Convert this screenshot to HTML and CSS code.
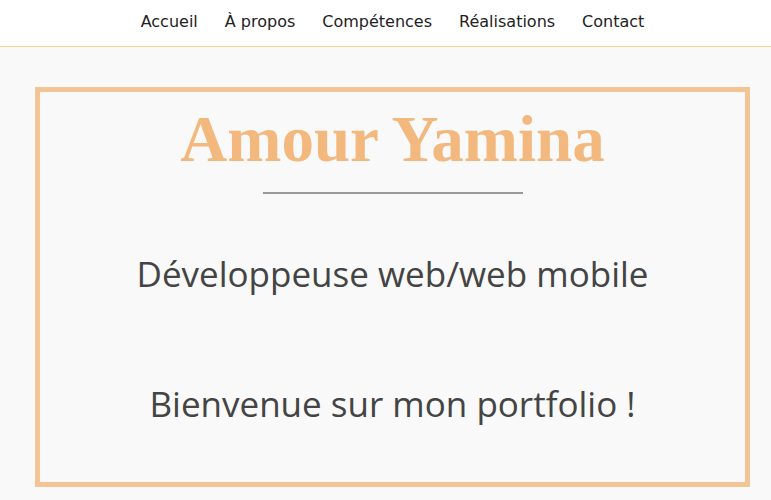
FILE: index.html
```html
<!DOCTYPE html>
<html lang="fr">
<head>
<meta charset="utf-8">
<title>Amour Yamina</title>
<link rel="stylesheet" href="styles.css">
</head>
<body>
<header class="header">
  <nav class="nav">
    <a href="#">Accueil</a>
    <a href="#">À propos</a>
    <a href="#">Compétences</a>
    <a href="#">Réalisations</a>
    <a href="#">Contact</a>
  </nav>
</header>
<main class="main">
  <section class="hero">
    <h1 class="title">Amour Yamina</h1>
    <hr class="rule">
    <p class="subtitle">Développeuse web/web mobile</p>
    <p class="welcome">Bienvenue sur mon portfolio !</p>
  </section>
</main>
</body>
</html>
```
FILE: styles.css
```css
html, body { margin: 0; padding: 0; }
body { background: #f9f9f9; font-family: "Open Sans", sans-serif; }
.header {
  background: #fff;
  height: 46px;
  border-bottom: 1px solid #f8d48a;
  display: flex;
  justify-content: center;
  align-items: center;
}
.nav { display: flex; gap: 27px; padding: 0 0 2px 14px; }
.nav a {
  font-family: "DejaVu Sans", sans-serif;
  font-size: 16px;
  line-height: 20px;
  color: #222;
  text-decoration: none;
}
.main { padding: 40px 21px 0 35px; }
.hero {
  border: 5px solid #f3c594;
  height: 400px;
  box-sizing: border-box;
  display: flex;
  flex-direction: column;
  align-items: center;
}
.title {
  margin: 12px 0 0;
  font-family: "Liberation Serif", serif;
  font-weight: bold;
  font-size: 65px;
  line-height: 70px;
  color: #f3b87e;
}
.rule {
  width: 260px;
  border: 0;
  border-top: 2px solid #999;
  margin: 18px 0 0;
}
.subtitle, .welcome {
  margin: 0;
  font-size: 35px;
  color: #444;
  line-height: 50px;
}
.subtitle { margin-top: 55px; }
.welcome { margin-top: 80px; }
```
